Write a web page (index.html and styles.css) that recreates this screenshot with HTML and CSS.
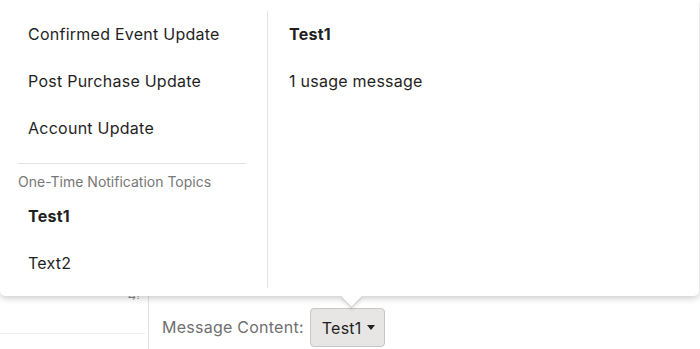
FILE: index.html
```html
<!DOCTYPE html>
<html>
<head>
<meta charset="utf-8">
<link rel="stylesheet" href="styles.css">
</head>
<body>
<div class="page">
  <div class="side">
    <span class="tiny-icon">⇆?</span>
    <div class="side-rule"></div>
  </div>
  <div class="main">
    <span class="label">Message Content:</span>
    <button class="select">Test1 <span class="caret"></span></button>
  </div>
</div>

<div class="popover">
  <div class="list">
    <div class="item">Confirmed Event Update</div>
    <div class="item">Post Purchase Update</div>
    <div class="item">Account Update</div>
    <div class="divider"></div>
    <div class="group">One-Time Notification Topics</div>
    <div class="item bold">Test1</div>
    <div class="item">Text2</div>
  </div>
  <div class="detail">
    <div class="item bold">Test1</div>
    <div class="item">1 usage message</div>
  </div>
  <div class="arrow"></div>
</div>
</body>
</html>
```
FILE: styles.css
```css
* { box-sizing: border-box; }
html, body { margin: 0; padding: 0; background: #fff; }
body {
  width: 700px;
  height: 349px;
  overflow: hidden;
  position: relative;
  font-family: Inter, "Open Sans", sans-serif;
  letter-spacing: 0.25px;
  color: #1f1f1f;
}
.page {
  display: flex;
  height: 349px;
}
.side {
  width: 149px;
  flex: none;
  border-right: 1px solid #e2e2e2;
  padding-right: 3px;
  position: relative;
}
.side-rule {
  margin-top: 333px;
  border-top: 1px solid #ececec;
}
.tiny-icon {
  position: absolute;
  left: 128px;
  top: 290px;
  font-size: 9px;
  color: #888;
  letter-spacing: 0;
}
.main {
  flex: 1;
  display: flex;
  align-items: flex-start;
  padding-top: 308px;
  padding-left: 13px;
}
.label {
  flex: none;
  font-size: 16px;
  color: #6f6f6f;
  line-height: 39px;
  margin-right: 6px;
}
.select {
  flex: none;
  height: 39px;
  width: 75px;
  background: #e8e6e5;
  border: 1px solid #c9c7c6;
  border-radius: 4px;
  font-family: inherit;
  letter-spacing: inherit;
  font-size: 16px;
  color: #1f1f1f;
  padding: 0 0 0 11px;
  display: flex;
  align-items: center;
  gap: 5px;
}
.caret {
  width: 0; height: 0;
  border-left: 4.5px solid transparent;
  border-right: 4.5px solid transparent;
  border-top: 5px solid #222;
}
.popover {
  position: absolute;
  left: 0;
  top: 0;
  width: 699px;
  height: 296px;
  background: #fff;
  border-radius: 0 0 5px 5px;
  box-shadow: 0 2px 7px rgba(0,0,0,0.22);
  display: grid;
  grid-template-columns: 268px 1fr;
  padding: 11px 0 8px;
}
.list {
  border-right: 1px solid #e3e3e3;
  padding: 0 21px 0 18px;
}
.item {
  height: 47px;
  line-height: 47px;
  padding-left: 10px;
  font-size: 16px;
  color: #1f1f1f;
}
.bold { font-weight: 700; }
.divider {
  margin-top: 11px;
  border-top: 1px solid #e2e2e2;
}
.group {
  font-size: 14px;
  color: #777;
  padding-top: 9px;
  height: 29px;
  line-height: 18px;
  letter-spacing: 0;
}
.detail {
  padding-left: 11px;
}
.arrow {
  position: absolute;
  left: 344px;
  top: 290px;
  width: 15px;
  height: 15px;
  background: #fff;
  transform: rotate(45deg);
  border-right: 1px solid #c8c8c8;
  border-bottom: 1px solid #c8c8c8;
  box-shadow: 2px 2px 3px rgba(0,0,0,0.08);
}
```
